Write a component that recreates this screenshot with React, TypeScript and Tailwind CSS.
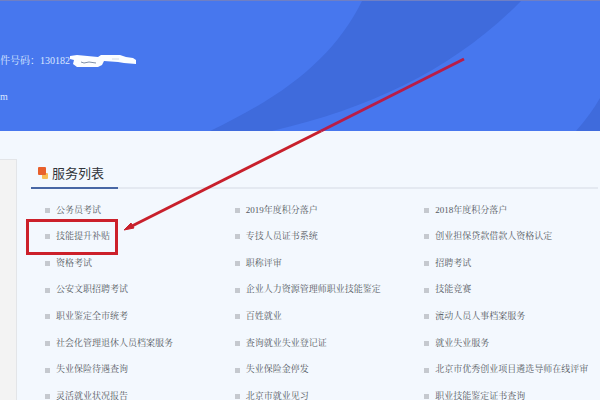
import React from 'react'

const services = [
	['公务员考试', '2019年度积分落户', '2018年度积分落户'],
	['技能提升补贴', '专技人员证书系统', '创业担保贷款借款人资格认定'],
	['资格考试', '职称评审', '招聘考试'],
	['公安文职招聘考试', '企业人力资源管理师职业技能鉴定', '技能竞赛'],
	['职业鉴定全市统考', '百姓就业', '流动人员人事档案服务'],
	['社会化管理退休人员档案服务', '查询就业失业登记证', '就业失业服务'],
	['失业保险待遇查询', '失业保险金停发', '北京市优秀创业项目遴选导师在线评审'],
	['灵活就业状况报告', '北京市就业见习', '职业技能鉴定证书查询'],
]

export default function App() {
	return (
		<div className="relative flex h-screen flex-col overflow-hidden bg-[#f3f8fe] text-[#555a62]">
			<Banner />
			<div className="flex flex-1 pt-7">
				<aside className="w-[17px] shrink-0 border-t border-r border-[#e3e5e8] bg-[#f3f3f3]" />
				<main className="min-w-0 flex-1 pl-[14px]">
					<Heading />
					<ServiceList />
				</main>
			</div>
			<Arrow />
		</div>
	)
}

const Banner = () => (
	<header className="relative h-[131px] shrink-0 overflow-hidden border-t border-[#6f7fc4] bg-[#4777ee] font-['Liberation_Serif','Noto_Serif_CJK_SC','Noto_Sans_CJK_SC',serif] text-[10px] leading-4 text-[#dce7ff]">
		<svg
			className="absolute inset-0 h-full w-full"
			viewBox="0 0 600 130"
			preserveAspectRatio="none"
			aria-hidden="true"
		>
			<path d="M362 0C335 54 290 92 210 130H272C375 106 456 66 521 0Z" fill="#3f6bdc" />
			<path d="M576 130Q591 113 600 97V130Z" fill="#3f6bdc" />
		</svg>
		<div className="relative pt-[52px]">
			<p className="flex items-center whitespace-nowrap">
				<span>件号码：130182</span>
				<Redaction />
			</p>
			<p className="mt-5">m</p>
		</div>
	</header>
)

const Redaction = () => (
	<svg className="h-3 w-[68px]" viewBox="0 0 68 12" aria-hidden="true">
		<path
			d="M0 1L7 0L28 2L31 0L50 0L56 2L63 3L66 5V9L54 8L48 7L34 6L32 10L28 12H7L3 9L4 5L0 4Z"
			fill="#fbfdff"
		/>
		<path d="M11 7L14 8L19 7L26 8" stroke="#8091a8" fill="none" />
		<path d="M42 4H49" stroke="#d5dce2" fill="none" />
	</svg>
)

const Heading = () => (
	<div className="mr-[2px] border-b-2 border-[#e4e9f1]">
		<h2 className="-mb-[2px] flex h-[30px] w-[87px] items-center border-b-2 border-[#4867a5] pl-[7px] font-['Noto_Sans_CJK_SC',sans-serif] text-[13px] text-[#30343a]">
			<svg className="mr-1 h-3 w-[10px]" viewBox="0 0 10 12" aria-hidden="true">
				<rect x="4" y="6" width="6" height="6" rx="1" fill="#f8bd55" />
				<rect width="8" height="8" rx="1" fill="#e8602c" />
			</svg>
			服务列表
		</h2>
	</div>
)

const ServiceList = () => (
	<ul className="mt-2 grid h-[213px] grid-cols-3 grid-rows-8 font-['Liberation_Serif','Noto_Serif_CJK_SC','Noto_Sans_CJK_SC',serif] text-[9px]">
		{services.flat().map((name) => (
			<li key={name} className="flex items-center pl-[14px] whitespace-nowrap">
				<span className="mr-[6px] h-[5px] w-[5px] bg-[#c5c9cf]" />
				{name === '技能提升补贴' ? (
					<span className="relative">
						<a href="#">{name}</a>
						<span className="absolute -inset-y-[11px] -right-[8px] -left-[30px] border-3 border-[#cc202a]" />
					</span>
				) : (
					<a href="#">{name}</a>
				)}
			</li>
		))}
	</ul>
)

const Arrow = () => (
	<svg
		className="pointer-events-none absolute top-0 left-0 h-[400px] w-[600px]"
		viewBox="0 0 600 400"
		aria-hidden="true"
	>
		<path d="M464 59L321 131" stroke="#b81d48" strokeWidth="3" />
		<path d="M321 131L132 226" stroke="#c8202c" strokeWidth="3" />
		<path d="M124 230L131 223L134 228Z" fill="#c8202c" stroke="#c8202c" />
	</svg>
)
